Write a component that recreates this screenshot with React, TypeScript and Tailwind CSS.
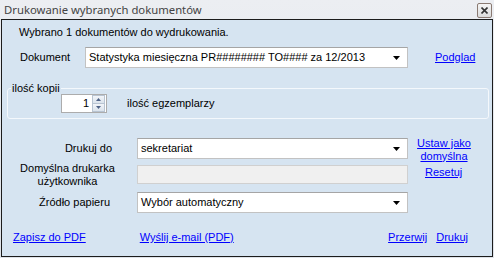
import React from "react";

const font = { fontFamily: '"Liberation Sans", Arial, sans-serif' };

function Arrow() {
  return (
    <svg width="8" height="4" viewBox="0 0 8 4" className="shrink-0">
      <path d="M0 0 H7 L3.5 4 Z" fill="#000" />
    </svg>
  );
}

function Combo({ text, className = "" }: { text: string; className?: string }) {
  return (
    <div
      className={`flex items-center justify-between bg-white border border-[#c2c2c2] border-t-[#a5a5a5] pl-[3px] pr-[6px] ${className}`}
    >
      <span className="text-[11px] leading-[13px] text-black whitespace-nowrap">{text}</span>
      <Arrow />
    </div>
  );
}

function Link({ children, className = "" }: { children: React.ReactNode; className?: string }) {
  return (
    <span className={`text-[11px] leading-[13px] text-[#0000ff] underline ${className}`}>{children}</span>
  );
}

export default function App() {
  return (
    <div
      className="w-[494px] h-[258px] flex flex-col bg-gradient-to-b from-[#eceef2] to-[#dfe3e9] overflow-hidden"
      style={font}
    >
      {/* Title bar */}
      <div className="h-[19px] flex items-center justify-between pl-[4px] pr-[2px]">
        <span
          className="text-[11.3px] leading-[15px] text-[#444] whitespace-nowrap"
          style={{ fontFamily: '"Noto Sans", "Liberation Sans", sans-serif' }}
        >
          Drukowanie wybranych dokumentów
        </span>
        <div className="w-[15px] h-[15px] mt-[1px] border border-[#8a7a72] rounded-[2px] bg-gradient-to-b from-[#f5f5f5] to-[#dcdcdc] flex items-center justify-center">
          <svg width="7" height="7" viewBox="0 0 7 7">
            <path d="M0.5 0.5 L6.5 6.5 M6.5 0.5 L0.5 6.5" stroke="#333" strokeWidth="1.6" />
          </svg>
        </div>
      </div>

      {/* Panel */}
      <div className="ml-[1px] mr-[1px] mb-[1px] flex-1 border border-[#1c1c1c] bg-[#d6e4f1] flex flex-col text-black">
        <div className="mt-[6px] ml-[17px] text-[11px] leading-[13px]">
          Wybrano 1 dokumentów do wydrukowania.
        </div>

        <div className="mt-[8px] flex items-center h-[21px]">
          <span className="ml-[18px] w-[65px] text-[11px] leading-[13px]">Dokument</span>
          <Combo text="Statystyka miesięczna PR######## TO#### za 12/2013" className="w-[323px] h-[21px]" />
          <Link className="ml-[27px]">Podglad</Link>
        </div>

        <fieldset className="mt-[14px] ml-[5px] w-[482px] h-[37px] border border-[#f4f8fc] rounded-[3px] px-0 pb-0 pt-0 relative">
          <legend className="ml-[3px] px-[1px] text-[11px] leading-[13px]">ilość kopii</legend>
          <div className="flex items-center -mt-[1px]">
            <div className="ml-[53px] w-[46px] h-[19px] bg-white border border-[#acacac] flex items-center justify-end">
              <span className="text-[11px] leading-[13px] mr-[3px]">1</span>
              <div className="flex flex-col w-[13px] h-[17px] mr-[1px]">
                <div className="flex-1 border border-[#b8c4d2] bg-gradient-to-b from-[#f2f5f9] to-[#dbe3ec] flex items-center justify-center">
                  <svg width="5" height="3" viewBox="0 0 5 3">
                    <path d="M0 3 L2.5 0 L5 3 Z" fill="#4d6185" />
                  </svg>
                </div>
                <div className="flex-1 border border-[#b8c4d2] border-t-0 bg-gradient-to-b from-[#f2f5f9] to-[#dbe3ec] flex items-center justify-center">
                  <svg width="5" height="3" viewBox="0 0 5 3">
                    <path d="M0 0 L5 0 L2.5 3 Z" fill="#4d6185" />
                  </svg>
                </div>
              </div>
            </div>
            <span className="ml-[20px] text-[11px] leading-[13px]">ilość egzemplarzy</span>
          </div>
        </fieldset>

        <div className="mt-[19px] flex items-center h-[21px]">
          <span className="w-[110px] text-right text-[11px] leading-[13px] pr-[0px]">Drukuj do</span>
          <Combo text="sekretariat" className="ml-[25px] w-[271px] h-[21px]" />
          <div className="ml-[6px] mt-[2px] flex flex-col items-center w-[60px]">
            <Link>Ustaw jako</Link>
            <Link>domyślna</Link>
          </div>
        </div>

        <div className="mt-[6px] flex items-center h-[19px]">
          <div className="w-[131px] flex flex-col items-center text-[11px] leading-[13px]">
            <span>Domyślna drukarka</span>
            <span>użytkownika</span>
          </div>
          <div className="ml-[4px] w-[271px] h-[19px] bg-[#f0f0f0] border border-[#d0d0d0]" />
          <Link className="ml-[17px] mt-[-4px]">Resetuj</Link>
        </div>

        <div className="mt-[8px] flex items-center h-[21px]">
          <span className="w-[108px] text-right text-[11px] leading-[13px]">Źródło papieru</span>
          <Combo text="Wybór automatyczny" className="ml-[27px] w-[271px] h-[21px]" />
        </div>

        <div className="mt-[18px] flex items-center">
          <Link className="ml-[11px]">Zapisz do PDF</Link>
          <Link className="ml-[54px]">Wyślij e-mail (PDF)</Link>
          <Link className="ml-auto">Przerwij</Link>
          <Link className="ml-[9px] mr-[24px]">Drukuj</Link>
        </div>
      </div>
    </div>
  );
}
